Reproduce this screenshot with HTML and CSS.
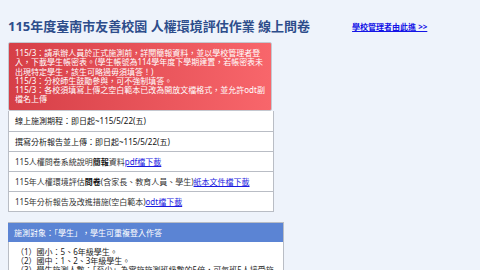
FILE: index.html
```html
<!DOCTYPE html>
<html lang="zh-Hant">
<head>
    <meta charset="UTF-8">
    <meta name="viewport" content="width=device-width, initial-scale=1.0">
    <title>115年度臺南市友善校園 人權環境評估作業 線上問卷</title>
    <link rel="stylesheet" href="styles.css">
</head>
<body>
    <div class="top-bar">
        <h1>115年度臺南市友善校園 人權環境評估作業 線上問卷</h1>
        <a class="admin-link" href="#">學校管理者由此進 &gt;&gt;</a>
    </div>

    <div class="notice">
        115/3：請承辦人員於正式施測前，詳閱簡報資料，並以學校管理者登入，下載學生帳密表。(學生帳號為114學年度下學期建置，若帳密表未出現特定學生，該生可略過毋須填答！)<br>
        115/3：分校師生鼓勵參與，可不強制填答。<br>
        115/3：各校須填寫上傳之空白範本已改為開放文檔格式，並允許odt副檔名上傳
    </div>

    <ul class="info-list">
        <li class="strong">線上施測期程：即日起~115/5/22(五)</li>
        <li class="strong">撰寫分析報告並上傳：即日起~115/5/22(五)</li>
        <li>115人權問卷系統說明<b>簡報</b>資料<a href="#">pdf檔下載</a></li>
        <li>115年人權環境評估<b>問卷</b>(含家長、教育人員、學生)<a href="#">紙本文件檔下載</a></li>
        <li>115年分析報告及改進措施(空白範本)<a href="#">odt檔下載</a></li>
    </ul>

    <div class="panel">
        <div class="panel-head">施測對象：「學生」，學生可重複登入作答</div>
        <div class="panel-body">
            （1）國小：5、6年級學生。<br>
            （2）國中：1、2、3年級學生。<br>
            （3）學生施測人數：「至少」為實施施測班級數的5倍，可每班5人接受施測。
        </div>
    </div>
</body>
</html>
```

FILE: styles.css
```css
body {
    font-family: "Noto Sans", "Noto Sans CJK TC", sans-serif;
    background-color: #eef3fb;
    color: #222;
    margin: 0;
    padding: 15px 8px 0;
}
.top-bar {
    display: flex;
    align-items: center;
    height: 20px;
    margin-bottom: 7px;
}
.top-bar h1 {
    margin: 0;
    font-size: 13px;
    font-weight: bold;
    color: #2d4d8b;
    white-space: nowrap;
}
.admin-link {
    margin-left: 42px;
    margin-top: 2px;
    font-size: 8px;
    font-weight: bold;
    color: #1414e6;
}
.notice {
    width: 252px;
    padding: 5px 4px 6px 6px;
    font-size: 8px;
    line-height: 9.3px;
    color: #fff;
    background: linear-gradient(to right, #d63f47, #f8666b);
    border: 1px solid #c4c8d0;
    border-radius: 2px;
}
.info-list {
    list-style: none;
    margin: 0;
    padding: 0;
    width: 264px;
    background-color: #fff;
    border: 1px solid #b9bdc5;
    border-top: none;
}
.info-list li {
    height: 19px;
    line-height: 19px;
    padding-left: 6px;
    font-size: 8px;
    color: #333;
    border-top: 1px solid #b9bdc5;
    white-space: nowrap;
}
.info-list li:first-child {
    border-top: none;
    height: 20px;
}
.info-list li.strong {
    color: #111;
}
.info-list b {
    color: #111;
}
.info-list a {
    color: #1a1ae0;
}
.panel {
    margin-top: 10px;
    width: 274px;
    background-color: #fff;
    border: 1px solid #b9bdc5;
    border-top: none;
}
.panel-head {
    height: 19px;
    line-height: 19px;
    padding-left: 6px;
    margin: 0 -1px;
    font-size: 8px;
    color: #fff;
    background-color: #5b84d4;
    border-top: 1px solid #b9bdc5;
    border-right: 1px solid #b9bdc5;
}
.panel-body {
    padding: 5px 7px;
    font-size: 8px;
    line-height: 9px;
    color: #222;
}
```
